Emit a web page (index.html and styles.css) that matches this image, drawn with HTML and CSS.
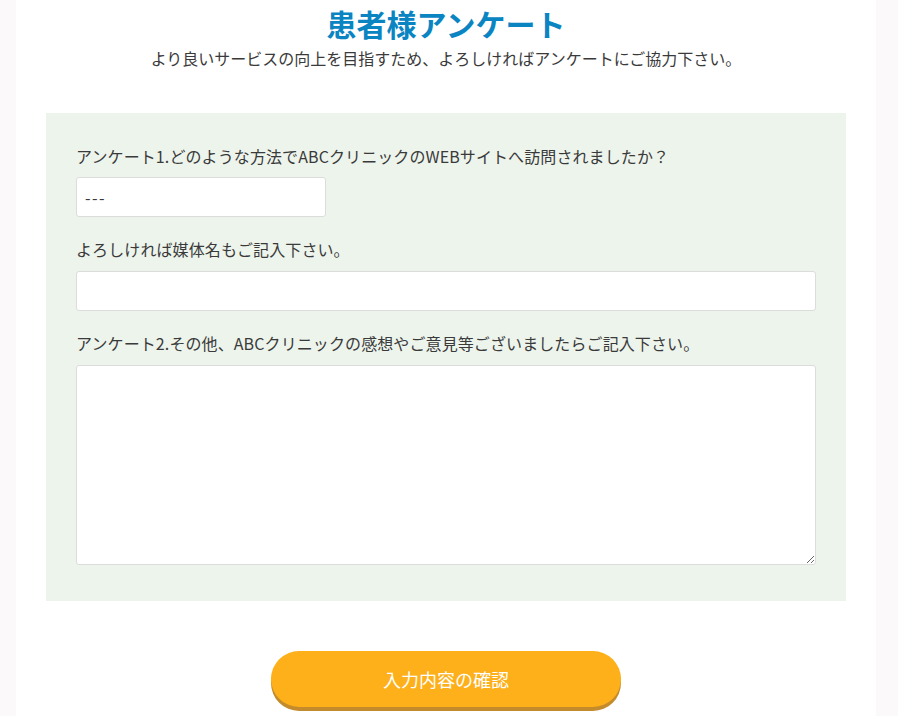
FILE: index.html
```html
<!DOCTYPE html>
<html lang="ja">
<head>
    <meta charset="UTF-8">
    <meta name="viewport" content="width=device-width, initial-scale=1.0">
    <title>患者様アンケート</title>
    <link rel="stylesheet" href="styles.css">
</head>
<body>
    <div class="page">
        <!-- Heading -->
        <div class="head">
            <h1>患者様アンケート</h1>
            <p class="lead">より良いサービスの向上を目指すため、よろしければアンケートにご協力下さい。</p>
        </div>

        <!-- Questions -->
        <div class="form-box">
            <label class="q-label" for="q1">アンケート1.どのような方法でABCクリニックのWEBサイトへ訪問されましたか？</label>
            <select id="q1" class="field field-select">
                <option>---</option>
            </select>

            <label class="q-label" for="media">よろしければ媒体名もご記入下さい。</label>
            <input type="text" id="media" class="field field-text" />

            <label class="q-label" for="q2">アンケート2.その他、ABCクリニックの感想やご意見等ございましたらご記入下さい。</label>
            <textarea id="q2" class="field field-area"></textarea>
        </div>

        <!-- Submit -->
        <div class="submit-row">
            <button type="button" class="btn-confirm">入力内容の確認</button>
        </div>
    </div>
</body>
</html>
```

FILE: styles.css
```css
/* Body styling */
body {
    margin: 0;
    padding: 0;
    background: #fbf9fa;
    font-family: "Noto Sans CJK JP", "Noto Sans", sans-serif;
    color: #3a3a3a;
}

/* White page column */
.page {
    width: 860px;
    margin-left: 16px;
    background: #fff;
    padding-bottom: 40px;
}

/* Heading */
.head {
    text-align: center;
    padding-top: 3px;
}

h1 {
    margin: 0;
    font-size: 30px;
    line-height: 40px;
    font-weight: bold;
    color: #0a85c2;
}

.lead {
    margin: 0;
    font-size: 16px;
    line-height: 30px;
}

/* Green form box */
.form-box {
    margin: 40px 30px 0;
    background: #edf4ec;
    padding: 31px 30px 36px;
}

.q-label {
    display: block;
    font-size: 16px;
    line-height: 24px;
    letter-spacing: 0.1px;
    margin-bottom: 9px;
}

/* Input fields */
.field {
    display: block;
    box-sizing: border-box;
    border: 1px solid #dcdcdc;
    border-radius: 3px;
    background: #fff;
    font-family: inherit;
    font-size: 16px;
    color: #3a3a3a;
    margin-bottom: 20px;
}

.field-select {
    width: 250px;
    height: 40px;
    padding: 0 8px;
    letter-spacing: 1.5px;
    appearance: none;
    -webkit-appearance: none;
}

.field-text {
    width: 100%;
    height: 40px;
    padding: 0 12px;
}

.q-label + .field-text {
    margin-top: 10px;
}

.field-area {
    width: 100%;
    height: 200px;
    margin: 10px 0 0;
    resize: vertical;
}

/* Confirm button */
.submit-row {
    display: flex;
    justify-content: center;
    padding-top: 50px;
}

.btn-confirm {
    width: 350px;
    height: 56px;
    border: none;
    border-radius: 28px;
    background: #fdb01a;
    box-shadow: 0 4px 0 #c38b2b;
    color: #fff;
    font-family: inherit;
    font-size: 18px;
    cursor: pointer;
}
```
